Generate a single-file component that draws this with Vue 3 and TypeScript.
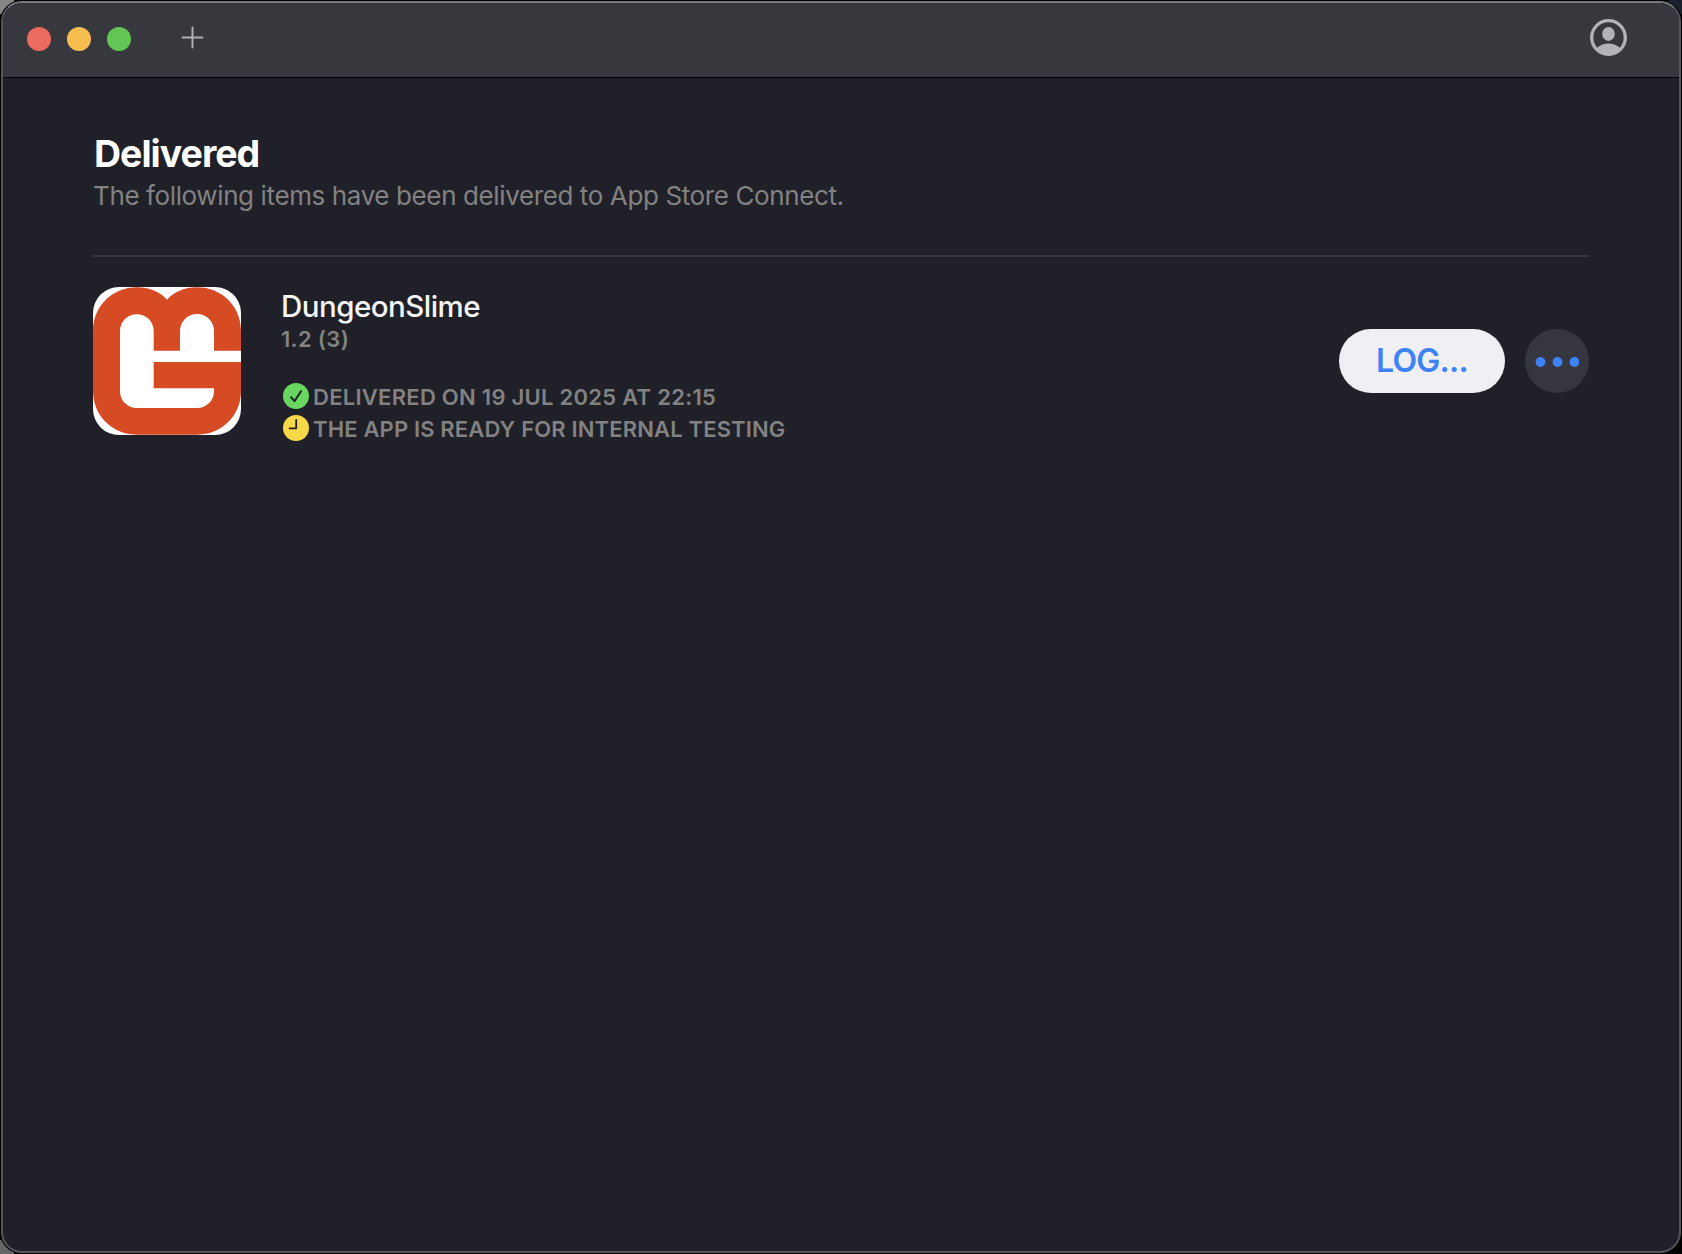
<script setup lang="ts">
interface Delivery {
  name: string
  version: string
  delivered: string
  state: string
}

const lights: string[] = ['close', 'minimize', 'maximize']

const deliveries: Delivery[] = [
  {
    name: 'DungeonSlime',
    version: '1.2 (3)',
    delivered: 'DELIVERED ON 19 JUL 2025 AT 22:15',
    state: 'THE APP IS READY FOR INTERNAL TESTING',
  },
]
</script>

<template>
  <div class="desktop">
    <div class="window">
      <header class="titlebar">
        <div class="lights">
          <span v-for="l in lights" :key="l" class="light" :class="l"></span>
        </div>
        <svg class="plus" width="22" height="22" viewBox="0 0 22 22">
          <path d="M11.5 .5v20M1.5 10.5h20" stroke="#b0b1b6" stroke-width="2" stroke-linecap="round" />
        </svg>
        <svg class="account" width="38" height="38" viewBox="0 0 38 38">
          <defs>
            <clipPath id="face"><circle cx="19.5" cy="18.5" r="18" /></clipPath>
          </defs>
          <circle cx="19.5" cy="18.5" r="16.8" fill="none" stroke="#b2b3b8" stroke-width="3.3" />
          <ellipse cx="19.5" cy="14.9" rx="6.3" ry="7" fill="#b2b3b8" />
          <ellipse cx="19.5" cy="34.5" rx="13.8" ry="10" fill="#b2b3b8" clip-path="url(#face)" />
        </svg>
      </header>

      <main class="content">
        <h1>Delivered</h1>
        <p class="subtitle">The following items have been delivered to App Store Connect.</p>

        <section v-for="d in deliveries" :key="d.name" class="item">
          <svg class="logo" width="148" height="148" viewBox="0 0 444 444">
            <rect width="444" height="444" fill="#fff" />
            <path
              fill="#d74b24"
              d="M0 132C0 58 58 1 132 1C169 1 200 14 222 38C244 14 275 1 312 1C386 1 444 58 444 132V191H363V132A51 51 0 0 0 261 132V191H182V132A50.5 50.5 0 0 0 81 132V313A50 50 0 0 0 131 363H313A50 50 0 0 0 363 313V304H182V225H444V313C444 386 386 443 313 443H131C58 443 0 386 0 313Z"
            />
          </svg>

          <div class="info">
            <div class="name">{{ d.name }}</div>
            <div class="version">{{ d.version }}</div>
            <div class="status first">
              <svg width="26" height="26" viewBox="0 0 26 26">
                <circle cx="13" cy="13" r="13" fill="#68d660" />
                <path d="M8 14.2l3.5 4L18 8.2" fill="none" stroke="#202028" stroke-width="2" stroke-linecap="round" stroke-linejoin="round" />
              </svg>
              <span class="delivered">{{ d.delivered }}</span>
            </div>
            <div class="status">
              <svg width="26" height="26" viewBox="0 0 26 26">
                <circle cx="13" cy="13" r="13" fill="#f9d949" />
                <path d="M13.2 5v8.3H6.6" fill="none" stroke="#202028" stroke-width="1.8" stroke-linecap="round" stroke-linejoin="round" />
              </svg>
              <span class="state">{{ d.state }}</span>
            </div>
          </div>

          <button class="log"><span>LOG...</span></button>
          <button class="more" aria-label="More">
            <svg width="44" height="10" viewBox="0 0 44 10">
              <circle v-for="x in [5, 22, 39]" :key="x" :cx="x" cy="5" r="4.9" fill="#3d82f7" />
            </svg>
          </button>
        </section>
      </main>
    </div>
  </div>
</template>

<style>
body {
  margin: 0;
  background: #000;
}
</style>

<style scoped>
.desktop {
  box-sizing: border-box;
  width: 1682px;
  height: 1254px;
  padding: 1px;
  overflow: hidden;
  font-family: Inter, "Liberation Sans", sans-serif;
  background:
    linear-gradient(#858585, #858585) 0 0 / 14px 14px no-repeat,
    linear-gradient(#1a212c, #1a212c) 100% 0 / 14px 14px no-repeat,
    linear-gradient(#666, #666) 0 100% / 14px 14px no-repeat,
    #000;
}
.window {
  box-sizing: border-box;
  height: 1252px;
  border: 2px solid #54555a;
  border-top-color: #77787b;
  border-radius: 21px;
  background: #202028;
  box-shadow: 0 0 0 1px #000;
  overflow: hidden;
}
.titlebar {
  box-sizing: border-box;
  display: flex;
  align-items: center;
  height: 75px;
  padding: 0 52px 4px 24px;
  background: #37383d;
  border-bottom: 1px solid #000;
}
.lights {
  display: flex;
  gap: 16px;
}
.light {
  width: 24px;
  height: 24px;
  border-radius: 50%;
  margin-top: 2px;
}
.close { background: #ed6a5f; }
.minimize { background: #f6be50; }
.maximize { background: #62c655; }
.plus {
  margin-left: 50px;
  overflow: visible;
}
.account {
  margin-left: auto;
  overflow: visible;
}
.content {
  padding: 53px 90px 0;
}
h1 {
  margin: 0;
  padding-left: 1px;
  font-size: 37.5px;
  line-height: 46px;
  font-weight: 700;
  letter-spacing: -1px;
  color: #fff;
}
.subtitle {
  margin: 0;
  padding: 4px 0 44px;
  border-bottom: 2px solid #363740;
  font-size: 26px;
  line-height: 30px;
  letter-spacing: -0.385px;
  color: #828282;
  white-space: nowrap;
}
.item {
  display: flex;
  align-items: center;
  padding-top: 29px;
}
.logo {
  border-radius: 26px;
  flex: none;
}
.info {
  flex: 1;
  height: 150px;
  margin-left: 40px;
  white-space: nowrap;
  color: #828282;
}
.name {
  font-size: 29.5px;
  line-height: 40px;
  font-weight: 500;
  letter-spacing: -0.53px;
  color: #f4f4f5;
}
.version {
  font-size: 22px;
  line-height: 26px;
  font-weight: 600;
  letter-spacing: 0.32px;
}
.status {
  display: flex;
  align-items: center;
  gap: 4px;
  height: 32px;
  padding-left: 2px;
  font-size: 22px;
  font-weight: 600;
}
.status svg {
  margin-bottom: 2px;
}
.first {
  margin-top: 29px;
}
.delivered {
  letter-spacing: 0.27px;
}
.state {
  letter-spacing: 0.15px;
}
button {
  border: 0;
  padding: 0;
  font-family: inherit;
  display: flex;
  align-items: center;
  justify-content: center;
}
.log {
  width: 166px;
  height: 64px;
  padding-bottom: 2px;
  border-radius: 32px;
  background: #f0eff4;
  color: #3d82f7;
  font-size: 32px;
  font-weight: 600;
  letter-spacing: -0.7px;
}
.more {
  width: 64px;
  height: 64px;
  margin-left: 20px;
  padding-top: 2px;
  border-radius: 50%;
  background: #35363e;
}
.more circle {
  transform: translateX(0.5px);
}
</style>
